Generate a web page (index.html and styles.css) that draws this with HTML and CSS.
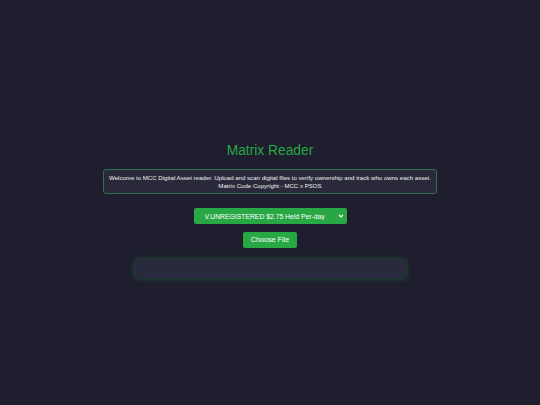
FILE: index.html
```html
<!DOCTYPE html>
<html lang="en">
<head>
    <meta charset="UTF-8">
    <meta name="viewport" content="width=device-width, initial-scale=1.0">
    <title>Matrix Reader</title>
    <link rel="stylesheet" href="styles.css">
</head>
<body>
    <div class="container">
        <h1>Matrix Reader</h1>
        <div class="intro">
            Welcome to MCC Digital Asset reader. Upload and scan digital files to verify ownership and track who owns each asset.<br>
            Matrix Code Copyright - MCC x PSOS
        </div>
        <div class="select-wrap">
            <select id="plan">
                <option>V.UNREGISTERED $2.75 Held Per-day</option>
            </select>
            <svg class="arrow" width="6" height="4" viewBox="0 0 6 4"><path d="M1 1 L3 3 L5 1" fill="none" stroke="#fff" stroke-width="1.2"/></svg>
        </div>
        <label for="fileInput" class="file-btn">Choose File</label>
        <input type="file" id="fileInput">
        <div class="result" id="result"></div>
    </div>
</body>
</html>
```

FILE: styles.css
```css
body {
    font-family: "Liberation Sans", Arial, sans-serif;
    background-color: #1e1e2e;
    color: #fff;
    margin: 0;
    padding: 0;
    display: flex;
    justify-content: center;
    align-items: center;
    min-height: 100vh;
}
.container {
    display: flex;
    flex-direction: column;
    align-items: center;
    padding-top: 16px;
}
h1 {
    font-size: 13.8px;
    line-height: 16px;
    font-weight: normal;
    color: #28a745;
    margin: 0 0 10px;
}
.intro {
    width: 322px;
    padding: 4px 5px;
    background-color: #29293b;
    border: 1px solid #33704a;
    border-radius: 3px;
    font-size: 6.1px;
    line-height: 7.5px;
    text-align: center;
    color: #f0f0f0;
    margin-bottom: 14px;
}
.select-wrap {
    position: relative;
    margin-bottom: 8px;
}
select {
    display: block;
    -webkit-appearance: none;
    appearance: none;
    width: 153px;
    height: 16px;
    background-color: #28a745;
    color: #fff;
    border: none;
    border-radius: 2px;
    font-family: inherit;
    font-size: 6.8px;
    padding: 0 0 0 11px;
}
.select-wrap .arrow {
    position: absolute;
    right: 3px;
    top: 50%;
    transform: translateY(-50%);
}
input[type="file"] {
    display: none;
}
.file-btn {
    display: block;
    background-color: #28a745;
    color: #fff;
    width: 54px;
    height: 16px;
    line-height: 16px;
    text-align: center;
    font-size: 7.2px;
    border-radius: 2px;
    cursor: pointer;
    margin-bottom: 12px;
}
.result {
    width: 271px;
    height: 18px;
    background-color: #292a3d;
    border-radius: 4px;
    box-shadow: 0 0 5px 1px rgba(40, 167, 69, 0.35);
}
```
